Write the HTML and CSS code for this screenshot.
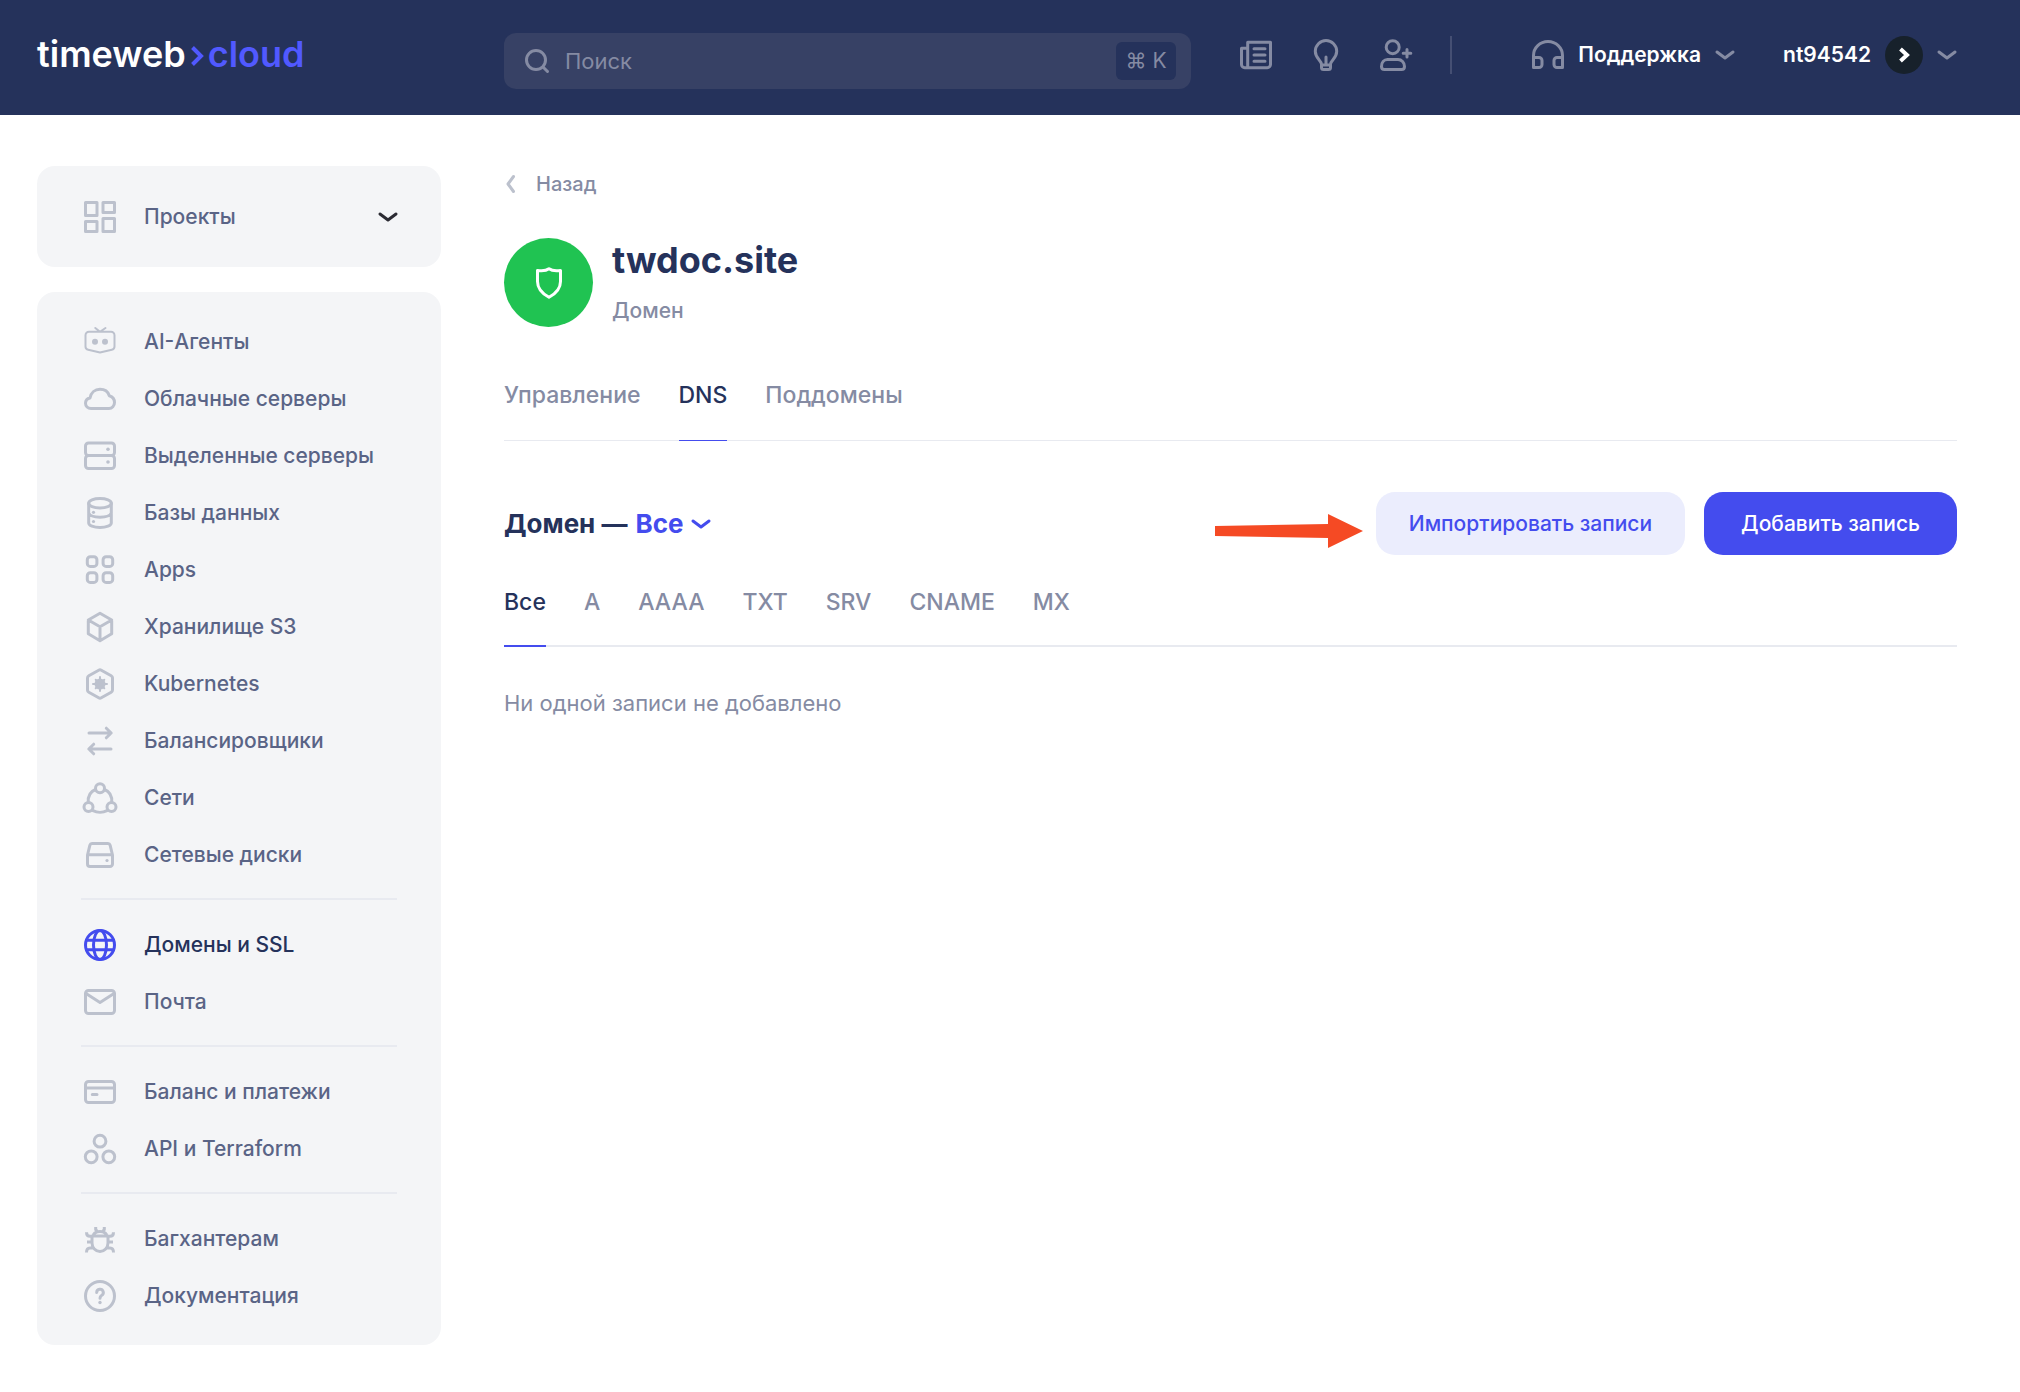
FILE: index.html
```html
<!DOCTYPE html>
<html lang="ru">
<head>
<meta charset="utf-8">
<meta name="viewport" content="width=device-width, initial-scale=1">
<title>twdoc.site — DNS</title>
<link rel="stylesheet" href="styles.css">
</head>
<body>
<header class="topbar">
  <a class="logo" href="#">timeweb<svg class="logo-mark" viewBox="0 0 14 20" aria-hidden="true"><path d="M2.500 1.500 11 10l-8.500 8.500"/></svg><span class="logo-accent">cloud</span></a>
  <div class="topbar-body">
    <label class="search">
      <svg class="search-icon" viewBox="0 0 24 24" aria-hidden="true"><circle cx="11" cy="11" r="9.500"/><path d="M18 18l4.500 4.500"/></svg>
      <input class="search-input" type="search" placeholder="Поиск" aria-label="Поиск">
      <kbd class="search-key">⌘ K</kbd>
    </label>
    <nav class="tools" aria-label="Инструменты">
      <a class="tool" href="#" aria-label="Новости"><svg class="icon" viewBox="0 0 32 32"><path d="M7.700 28.700V3.300H30.500V25.500a3.200 3.200 0 0 1-3.200 3.200H4.700a3.200 3.200 0 0 1-3.200-3.200V9.300H7.700M14 9.700H25M14 16H25M14 22.300H25"/></svg></a>
      <a class="tool" href="#" aria-label="Идеи"><svg class="icon" viewBox="0 0 32 32"><path d="M11.500 25.200C11.500 21.500 5.300 19.500 5.300 12.300a10.700 10.700 0 0 1 21.400 0C26.700 19.500 20.500 21.500 20.500 25.200V28.500a2 2 0 0 1-2 2H13.500a2 2 0 0 1-2-2ZM11.500 26H20.500M16 18V26"/></svg></a>
      <a class="tool" href="#" aria-label="Пригласить"><svg class="icon" viewBox="0 0 32 32"><circle cx="12.700" cy="8.200" r="6.500"/><path d="M7.500 20.500H18C21.500 20.500 24.500 23.500 24.500 27.500C24.500 29.500 23.500 30.500 21.500 30.500H4.500C2.500 30.500 1.500 29.500 1.500 27.500C1.500 23.500 4 20.500 7.500 20.500ZM27 10.500V18M23.200 14.300H30.800"/></svg></a>
    </nav>
    <div class="account">
      <button class="menu-button" type="button"><svg class="icon" viewBox="0 0 32 32" aria-hidden="true"><path d="M1.500 28.500V16.500a14.500 14 0 0 1 29 0V28.500H25a3 3 0 0 1-3-3V21.500a3 3 0 0 1 3-3H30.500M1.500 28.500H7a3 3 0 0 0 3-3V21.500a3 3 0 0 0-3-3H1.500"/></svg>Поддержка<svg class="chevron" viewBox="0 0 20 10" aria-hidden="true"><path d="M2 2l8 6 8-6"/></svg></button>
      <button class="menu-button" type="button">nt94542<span class="avatar"><svg class="avatar-mark" viewBox="0 0 12 16" aria-hidden="true"><path d="M2.500 2l6.500 6-6.500 6"/></svg></span><svg class="chevron" viewBox="0 0 20 10" aria-hidden="true"><path d="M2 2l8 6 8-6"/></svg></button>
    </div>
  </div>
</header>

<div class="layout">
  <aside class="sidebar">
    <button class="panel projects" type="button" aria-expanded="false">
      <svg class="icon" viewBox="0 0 32 32" aria-hidden="true"><path d="M1.500 1.500H13V14.500H1.500ZM19 1.500H30.500V11.500H19ZM1.500 20.500H13V30.500H1.500ZM19 17.500H30.500V30.500H19Z"/></svg>
      <span class="projects-name">Проекты</span>
      <svg class="chevron chevron-dark" viewBox="0 0 20 10" aria-hidden="true"><path d="M2 2l8 6 8-6"/></svg>
    </button>
    <nav class="panel menu" aria-label="Разделы">
      <ul class="menu-group">
        <li><a class="menu-item" href="#"><svg class="icon icon-thin" viewBox="0 0 32 32" aria-hidden="true"><path d="M5 5.800H27a3.500 3.500 0 0 1 3.500 3.500V20.500a3.200 3.200 0 0 1-2.700 3.200L16 26.500 4.200 23.700a3.200 3.200 0 0 1-2.700-3.200V9.300A3.500 3.500 0 0 1 5 5.800ZM11.300 2l4.700 3.800 5.500-3.800"/><circle class="dot" cx="11" cy="15.700" r="3"/><circle class="dot" cx="21" cy="15.700" r="3"/></svg>AI-Агенты</a></li>
        <li><a class="menu-item" href="#"><svg class="icon" viewBox="0 0 32 32" aria-hidden="true"><path d="M7 25.500C3.800 25.500 1.500 23 1.500 20.300C1.500 17.500 3.500 15.500 6 15C7 9.700 11 6.300 16 6.300C21 6.300 24.200 9.300 25.300 12.700C28.500 13.700 30.500 16.500 30.500 19.500C30.500 22.800 28 25.500 25 25.500Z"/></svg>Облачные серверы</a></li>
        <li><a class="menu-item" href="#"><svg class="icon" viewBox="0 0 32 32" aria-hidden="true"><rect x="1.500" y="3" width="29" height="12.500" rx="3"/><rect x="1.500" y="15.500" width="29" height="13" rx="3"/><circle class="dot" cx="24" cy="9.200" r="1.800"/><circle class="dot" cx="24" cy="22" r="1.800"/></svg>Выделенные серверы</a></li>
        <li><a class="menu-item" href="#"><svg class="icon" viewBox="0 0 32 32" aria-hidden="true"><ellipse cx="16" cy="6.300" rx="11.300" ry="4.700"/><path d="M4.700 6.300V26C4.700 28.500 9.700 30.500 16 30.500S27.300 28.500 27.300 26V6.300M4.700 16C7 21.500 25 21.500 27.300 16"/><circle class="dot" cx="9.500" cy="15.300" r="1.600"/><circle class="dot" cx="9.500" cy="24.500" r="1.600"/></svg>Базы данных</a></li>
        <li><a class="menu-item" href="#"><svg class="icon" viewBox="0 0 32 32" aria-hidden="true"><rect x="3.300" y="2.800" width="9.600" height="9.600" rx="3"/><rect x="19.100" y="2.800" width="9.600" height="9.600" rx="3"/><rect x="3.300" y="18.800" width="9.600" height="9.600" rx="3"/><rect x="19.100" y="18.800" width="9.600" height="9.600" rx="3"/></svg>Apps</a></li>
        <li><a class="menu-item" href="#"><svg class="icon" viewBox="0 0 32 32" aria-hidden="true"><path d="M16 2.300 27.700 9V22.800L16 29.700 4.300 22.800V9ZM4.300 9 16 15.700 27.700 9M16 15.700V29.700"/></svg>Хранилище S3</a></li>
        <li><a class="menu-item" href="#"><svg class="icon" viewBox="0 0 32 32" aria-hidden="true"><path d="M14.700 2.200a2.600 2.600 0 0 1 2.600 0L27.200 7.700a2.600 2.600 0 0 1 1.300 2.200V22.100a2.600 2.600 0 0 1-1.300 2.200L17.300 29.800a2.600 2.600 0 0 1-2.600 0L4.800 24.300a2.600 2.600 0 0 1-1.300-2.200V9.900a2.600 2.600 0 0 1 1.300-2.200Z"/><circle class="dot" cx="16" cy="16" r="5.500"/><path class="spokes" d="M16 9V23M9 16H23M11.700 11.700l8.600 8.600M20.300 11.700l-8.600 8.600"/></svg>Kubernetes</a></li>
        <li><a class="menu-item" href="#"><svg class="icon" viewBox="0 0 32 32" aria-hidden="true"><path d="M5 8H27M22.300 3.200 27.200 8 22.300 12.800M27 24H5M9.700 19.200 4.800 24 9.700 28.800"/></svg>Балансировщики</a></li>
        <li><a class="menu-item" href="#"><svg class="icon" viewBox="0 0 32 32" aria-hidden="true"><circle cx="16" cy="6.200" r="4.500"/><circle cx="4.500" cy="25" r="4.500"/><circle cx="27.500" cy="25" r="4.500"/><path d="M11.500 7.500C6.500 9.500 3.800 14.500 4.300 20.500M20.500 7.500C25.500 9.500 28.200 14.500 27.700 20.500M9 28.700C13 30.700 19 30.700 23 28.700"/></svg>Сети</a></li>
        <li><a class="menu-item" href="#"><svg class="icon" viewBox="0 0 32 32" aria-hidden="true"><path d="M8 4.500H24a2.200 2.200 0 0 1 2.100 1.600L28.500 16V25a2.500 2.500 0 0 1-2.500 2.500H6A2.500 2.500 0 0 1 3.500 25V16L5.900 6.100A2.200 2.200 0 0 1 8 4.500ZM3.500 15.800H28.500"/><circle class="dot" cx="23" cy="21.500" r="1.600"/></svg>Сетевые диски</a></li>
      </ul>
      <ul class="menu-group">
        <li><a class="menu-item menu-item-active" href="#" aria-current="page"><svg class="icon" viewBox="0 0 32 32" aria-hidden="true"><circle cx="16" cy="16" r="14.500"/><ellipse cx="16" cy="16" rx="6.500" ry="14.500"/><path d="M2.500 11.300H29.500M2.500 20.700H29.500"/></svg>Домены и SSL</a></li>
        <li><a class="menu-item" href="#"><svg class="icon" viewBox="0 0 32 32" aria-hidden="true"><rect x="1.500" y="4.500" width="29" height="23" rx="3"/><path d="M2 7.500 16 16.500 30 7.500"/></svg>Почта</a></li>
      </ul>
      <ul class="menu-group">
        <li><a class="menu-item" href="#"><svg class="icon" viewBox="0 0 32 32" aria-hidden="true"><rect x="1.500" y="5.500" width="29" height="21" rx="3"/><path d="M2 12H30M8.300 18.500H13"/></svg>Баланс и платежи</a></li>
        <li><a class="menu-item" href="#"><svg class="icon" viewBox="0 0 32 32" aria-hidden="true"><circle cx="16" cy="8.200" r="5.900"/><circle cx="7.200" cy="23.800" r="5.900"/><circle cx="24.800" cy="23.800" r="5.900"/></svg>API и Terraform</a></li>
      </ul>
      <ul class="menu-group">
        <li><a class="menu-item" href="#"><svg class="icon icon-flat" viewBox="0 0 32 32" aria-hidden="true"><path d="M8 13H24V20a8 8.500 0 0 1-16 0ZM9 13.500C9.500 10 12.500 8.500 16 8.500S22.500 10 23 13.500M11.700 4V6.500L13.500 9M20.300 4V6.500L18.500 9M2.500 9.200C2.500 12 4 13.300 6 13.300H8M29.500 9.200C29.500 12 28 13.300 26 13.300H24M3 19H8M24 19H29M2.500 29.500C2.500 26.500 4 25 6 25H9.500M29.500 29.500C29.500 26.500 28 25 26 25H22.500"/></svg>Багхантерам</a></li>
        <li><a class="menu-item" href="#"><svg class="icon" viewBox="0 0 32 32" aria-hidden="true"><circle cx="16" cy="16" r="14.500"/><path d="M12.700 12.500A3.300 3.300 0 1 1 17.500 15.500C16.400 16.200 16 16.800 16 18.300"/><circle class="dot" cx="16" cy="22.500" r="1.700"/></svg>Документация</a></li>
      </ul>
    </nav>
  </aside>

  <main class="content">
    <a class="back" href="#"><svg class="back-icon" viewBox="0 0 12 20" aria-hidden="true"><path d="M9.500 2.500 4 10l5.500 7.500"/></svg>Назад</a>
    <div class="domain">
      <span class="domain-badge"><svg class="shield" viewBox="0 0 26 32" aria-hidden="true"><path d="M13 1.700C10 4 6 4.200 1.500 3.500V14.500C1.500 22 6 26.500 13 30.300C20 26.500 24.500 22 24.500 14.500V3.500C20 4.200 16 4 13 1.700Z"/></svg></span>
      <div>
        <h1 class="domain-name">twdoc.site</h1>
        <p class="domain-kind">Домен</p>
      </div>
    </div>
    <nav class="tabs" aria-label="Домен">
      <a class="tab" href="#">Управление</a>
      <a class="tab tab-active" href="#" aria-current="page">DNS</a>
      <a class="tab" href="#">Поддомены</a>
    </nav>
    <div class="toolbar">
      <h2 class="filter"><label for="scope">Домен —</label>
        <select class="filter-select" id="scope"><option>Все</option></select>
        <svg class="chevron chevron-blue" viewBox="0 0 20 10" aria-hidden="true"><path d="M2 2l8 6 8-6"/></svg>
      </h2>
      <div class="actions">
        <svg class="pointer" viewBox="0 0 148 34" aria-hidden="true"><path d="M0 12 113 10V0L148 17 113 34V24L0 22Z"/></svg>
        <button class="button button-soft" type="button">Импортировать записи</button>
        <button class="button button-main" type="button">Добавить запись</button>
      </div>
    </div>
    <nav class="tabs tabs-records" aria-label="Тип записи">
      <a class="tab tab-active" href="#" aria-current="page">Все</a>
      <a class="tab" href="#">A</a>
      <a class="tab" href="#">AAAA</a>
      <a class="tab" href="#">TXT</a>
      <a class="tab" href="#">SRV</a>
      <a class="tab" href="#">CNAME</a>
      <a class="tab" href="#">MX</a>
    </nav>
    <p class="empty">Ни одной записи не добавлено</p>
  </main>
</div>
</body>
</html>
```

FILE: styles.css
```css
:root {
  --navy: #25325b;
  --blue: #444cee;
  --text: #5a6486;
  --muted: #858ba3;
  --icon: #bcc1cd;
  --panel: #f4f5f7;
  --line: #e8eaf0;
}

* {
  box-sizing: border-box;
}

body {
  margin: 0;
  background: #fff;
  color: var(--navy);
  font: 500 21px/28px Inter, "Noto Sans", sans-serif;
}

a {
  color: inherit;
  text-decoration: none;
}

button,
input,
select {
  padding: 0;
  border: 0;
  background: none;
  color: inherit;
  font: inherit;
}

button {
  cursor: pointer;
}

h1,
h2,
p,
ul {
  margin: 0;
  padding: 0;
}

ul {
  list-style: none;
}

svg {
  flex: none;
  overflow: visible;
  fill: none;
  stroke: currentColor;
  stroke-width: 3;
  stroke-linecap: round;
  stroke-linejoin: round;
}

.icon {
  width: 32px;
  height: 32px;
  color: var(--icon);
}

.icon-thin {
  stroke-width: 2;
}

.icon-flat {
  stroke-linecap: butt;
}

.dot {
  fill: currentColor;
  stroke: none;
}

.spokes {
  stroke-width: 2;
}

.chevron {
  width: 20px;
  height: 10px;
  color: var(--muted);
}

/* Top bar */

.topbar {
  display: flex;
  gap: 63px;
  min-height: 115px;
  padding: 33px 63px 26px 37px;
  background: var(--navy);
  color: #fff;
}

.logo {
  display: flex;
  flex: 0 0 404px;
  align-items: center;
  height: 42px;
  font-size: 36px;
  font-weight: 600;
  line-height: 42px;
}

.logo-mark {
  width: 14px;
  height: 20px;
  margin: 4px 4px 0;
  color: #5159ff;
  stroke-width: 4;
  stroke-linecap: butt;
  stroke-linejoin: miter;
}

.logo-accent {
  color: #5159ff;
}

.topbar-body {
  display: flex;
  flex: 1;
  align-items: flex-start;
}

.search {
  display: flex;
  flex: 0 1 687px;
  align-items: center;
  height: 56px;
  padding: 0 15px 0 21px;
  border-radius: 12px;
  background: #374165;
  color: var(--muted);
}

.search-icon {
  width: 24px;
  height: 24px;
}

.search-input {
  flex: 1;
  min-width: 0;
  margin-left: 16px;
  outline: 0;
  font-size: 22px;
  font-weight: 400;
}

.search-input::placeholder {
  color: var(--muted);
  opacity: 1;
}

.search-key {
  min-width: 60px;
  border-radius: 6px;
  background: var(--navy);
  font: 400 21px/38px Inter, "DejaVu Sans", sans-serif;
  text-align: center;
}

.tools {
  display: flex;
  gap: 38px;
  margin: 3px 0 0 49px;
  padding-right: 38px;
  border-right: 2px solid #454f73;
}

.tool {
  display: flex;
  align-items: center;
  height: 38px;
}

.tools .icon,
.account .icon {
  color: var(--muted);
}

.account {
  display: flex;
  gap: 48px;
  margin: 3px 0 0 auto;
}

.menu-button {
  display: flex;
  gap: 14px;
  align-items: center;
  height: 38px;
  font-weight: 600;
}

.avatar {
  display: flex;
  align-items: center;
  justify-content: center;
  width: 38px;
  height: 38px;
  border-radius: 50%;
  background: #17212b;
}

.avatar-mark {
  width: 12px;
  height: 16px;
  stroke-width: 4;
  stroke-linecap: butt;
  stroke-linejoin: miter;
}

/* Page */

.layout {
  display: flex;
  gap: 63px;
  align-items: flex-start;
  padding: 51px 63px 47px 37px;
}

.sidebar {
  display: flex;
  flex: 0 0 404px;
  flex-direction: column;
  gap: 25px;
}

.panel {
  border-radius: 18px;
  background: var(--panel);
  color: var(--text);
}

.projects {
  display: flex;
  gap: 28px;
  align-items: center;
  width: 100%;
  height: 101px;
  padding: 0 43px 0 47px;
  text-align: left;
}

.projects-name {
  flex: 1;
}

.chevron-dark {
  color: #2b2b33;
}

.menu {
  padding: 21px 44px;
}

.menu-group + .menu-group {
  margin-top: 15px;
  padding-top: 16px;
  border-top: 2px solid var(--line);
}

.menu-item {
  display: flex;
  gap: 28px;
  align-items: center;
  height: 57px;
  padding-left: 3px;
}

.menu-item-active {
  color: var(--navy);
}

.menu-item-active .icon {
  color: var(--blue);
}

.content {
  flex: 1;
  min-width: 0;
}

.back {
  display: inline-flex;
  gap: 20px;
  align-items: center;
  padding-top: 4px;
  color: var(--muted);
  font-size: 20px;
}

.back-icon {
  width: 12px;
  height: 20px;
  color: var(--icon);
}

.domain {
  display: flex;
  gap: 19px;
  margin-top: 37px;
}

.domain-badge {
  display: flex;
  align-items: center;
  justify-content: center;
  width: 89px;
  height: 89px;
  border-radius: 50%;
  background: #20c352;
  color: #fff;
}

.shield {
  width: 26px;
  height: 32px;
}

.domain-name {
  font-size: 36px;
  font-weight: 700;
  line-height: 44px;
}

.domain-kind {
  margin-top: 15px;
  color: var(--muted);
}

.tabs {
  display: flex;
  gap: 38px;
  margin-top: 54px;
  border-bottom: 1px solid var(--line);
  color: var(--muted);
  font-size: 23px;
}

.tab {
  margin-bottom: -1px;
  padding-bottom: 31px;
}

.tab-active {
  border-bottom: 1px solid var(--blue);
  color: var(--navy);
}

.toolbar {
  display: flex;
  align-items: center;
  justify-content: space-between;
  margin-top: 51px;
}

.filter {
  display: flex;
  gap: 8px;
  align-items: center;
  font-size: 26px;
  font-weight: 700;
  line-height: 32px;
}

.filter-select {
  appearance: none;
  color: var(--blue);
  cursor: pointer;
}

.chevron-blue {
  color: var(--blue);
}

.actions {
  position: relative;
  display: flex;
  gap: 19px;
}

/* Red callout lying to the left of the import button */
.pointer {
  position: absolute;
  top: 22px;
  right: 100%;
  width: 148px;
  height: 34px;
  margin-right: 13px;
  fill: #f54a24;
  stroke: none;
}

.button {
  height: 63px;
  border-radius: 19px;
}

.button-soft {
  padding: 0 33px;
  background: #ebedfd;
  color: var(--blue);
}

.button-main {
  padding: 0 37px;
  background: var(--blue);
  color: #fff;
}

.tabs-records {
  margin-top: 33px;
  border-bottom-width: 2px;
}

.tabs-records .tab {
  margin-bottom: -2px;
  padding-bottom: 29px;
}

.tabs-records .tab-active {
  border-bottom-width: 2px;
}

.empty {
  margin-top: 42px;
  color: var(--muted);
  font-size: 22px;
  font-weight: 400;
}
```
